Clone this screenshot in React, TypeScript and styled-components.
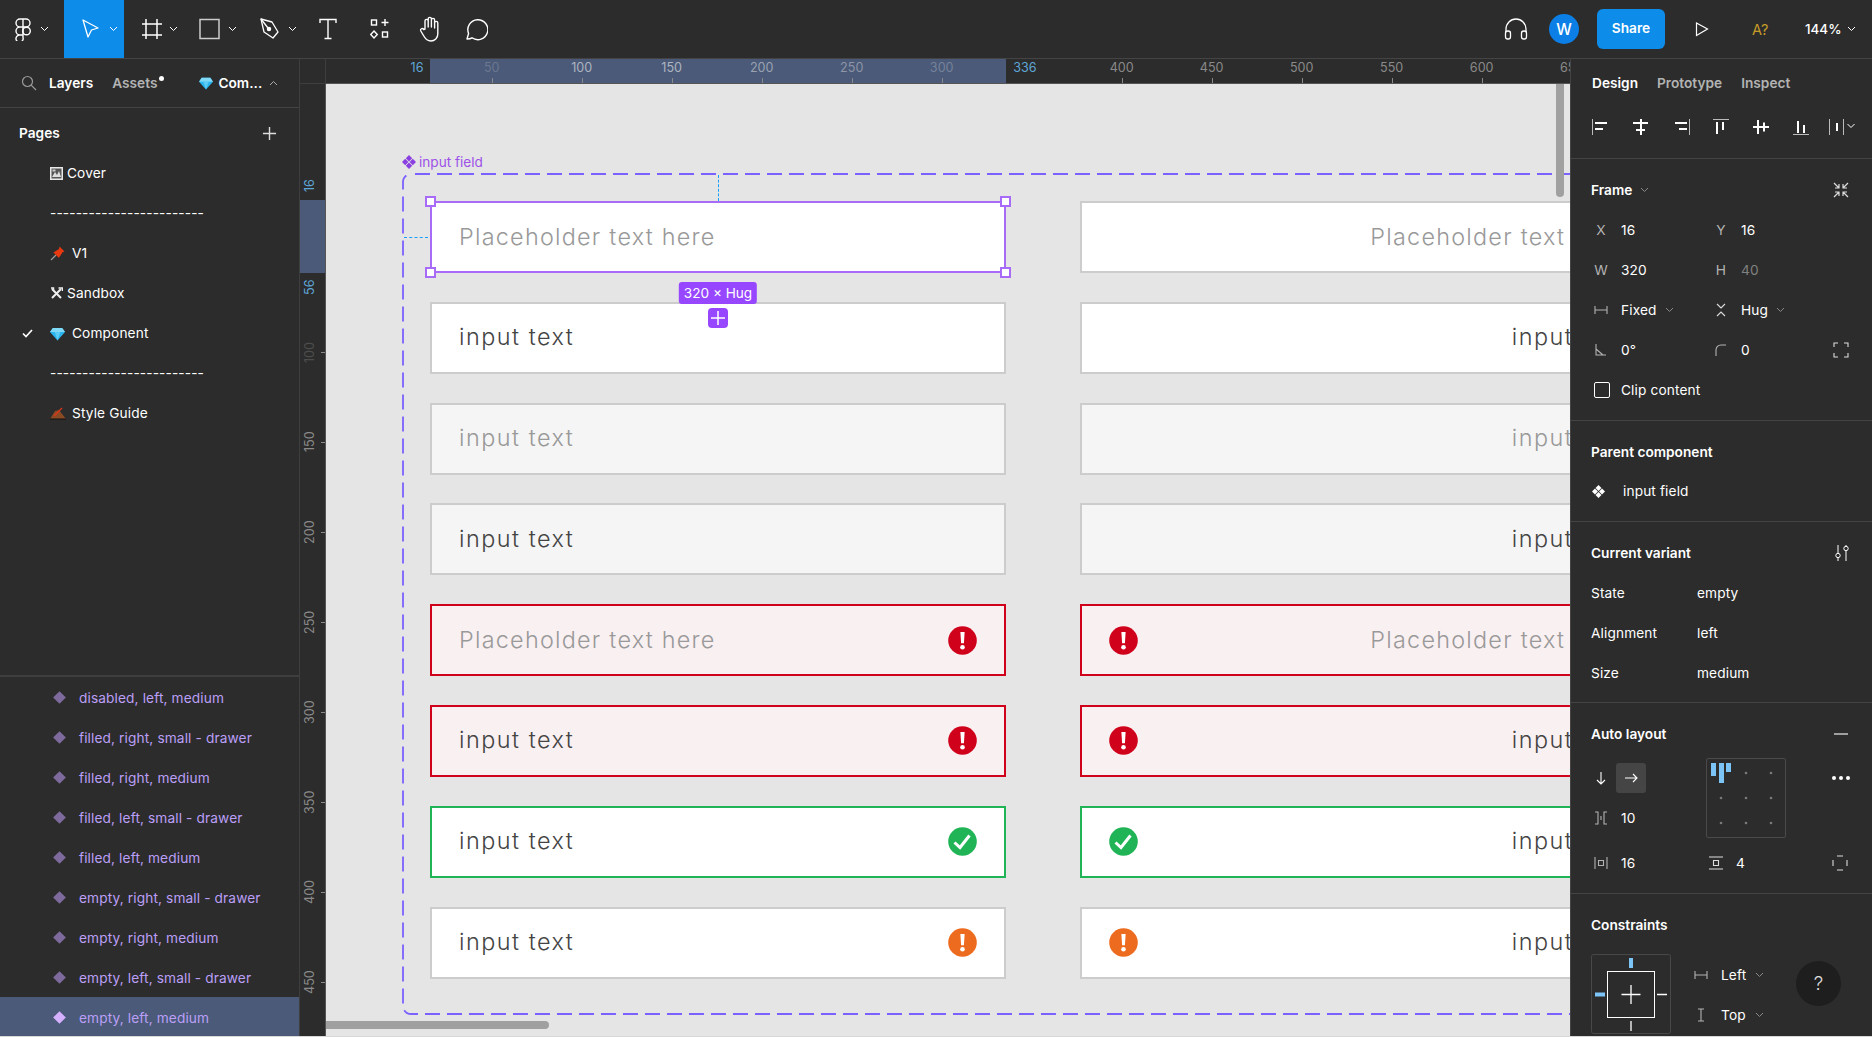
import React from "react";
import styled, { createGlobalStyle } from "styled-components";

const Global = createGlobalStyle`
  html, body { margin: 0; padding: 0; background: #d8d8d8; }
  body { font-family: Inter, "Noto Sans", sans-serif; font-size: 13.7px; color: #fff; }
  #root { width: 1872px; height: 1037px; overflow: hidden; }
`;

const Shell = styled.div`
  width: 1872px; height: 1036px; display: grid; overflow: hidden;
  grid-template-rows: 59px 977px; grid-template-columns: 300px 1270px 302px;
  background: #2c2c2c;
`;

/* ---------- toolbar ---------- */
const Toolbar = styled.header`
  grid-column: 1 / 4; display: flex; align-items: center; justify-content: space-between;
  height: 59px; box-sizing: border-box; border-bottom: 1px solid #444; background: #2c2c2c;
`;
const ToolGroup = styled.div`display: flex; height: 58px; align-items: stretch;`;
const ToolButton = styled.div<{ $w: number; $pad?: number; $gap?: number; $active?: boolean }>`
  width: ${p => p.$w}px; padding-left: ${p => p.$pad ?? 0}px; gap: ${p => p.$gap ?? 0}px; box-sizing: border-box;
  display: flex; align-items: center; justify-content: ${p => (p.$pad === undefined ? "center" : "flex-start")};
  background: ${p => (p.$active ? "#0d8ce9" : "transparent")};
`;
const RightTools = styled.div`display: flex; align-items: center; height: 58px;`;
const Avatar = styled.div`
  width: 30px; height: 30px; border-radius: 50%; background: #0b7fe6; margin-left: 21px;
  display: flex; align-items: center; justify-content: center; font-weight: 500; font-size: 15.5px;
`;
const ShareButton = styled.div`
  width: 68px; height: 40px; border-radius: 6px; background: #0d8ce9; margin-left: 18px; margin-bottom: 1px; box-sizing: border-box; padding-bottom: 2px;
  display: flex; align-items: center; justify-content: center; font-weight: 600; font-size: 13.7px;
`;
const PlayWrap = styled.div`margin-left: 30px; display: flex;`;
const FontWarn = styled.div`margin-left: 43px; width: 20px; color: #c59b27; font-size: 14.5px; white-space: nowrap;`;
const Zoom = styled.div`margin-left: 33px; font-size: 13.4px; font-weight: 500; width: 36px;`;
const ZoomChev = styled.div`margin-left: 6px; margin-right: 16px; display: flex;`;

/* ---------- left panel ---------- */
const LeftPanel = styled.aside`
  display: flex; flex-direction: column; border-right: 1px solid #3e3e3e; box-sizing: border-box;
  background: #2c2c2c; overflow: hidden; height: 978px;
`;
const LeftTabs = styled.div`
  height: 49px; flex: none; box-sizing: border-box; border-bottom: 1px solid #444;
  display: flex; align-items: center; padding-left: 21px; font-weight: 600;
`;
const Tab = styled.span<{ $dim?: boolean; $ml?: number }>`
  display: flex; color: ${p => (p.$dim ? "#b3b3b3" : "#fff")}; margin-left: ${p => p.$ml ?? 0}px; white-space: nowrap;
`;
const Dot = styled.i`width: 5px; height: 5px; border-radius: 50%; background: #fff; margin: -10px 0 0 2px;`;
const PagesHead = styled.div`
  height: 40px; margin-top: 5px; flex: none; display: flex; align-items: center; justify-content: space-between;
  padding: 0 22px 0 19px; font-weight: 600;
`;
const PagesList = styled.div`flex: 1; min-height: 0;`;
const PageRow = styled.div`height: 40px; display: flex; align-items: center; font-weight: 400; letter-spacing: .12px; white-space: nowrap;`;
const CheckCell = styled.div`width: 50px; flex: none; display: flex; justify-content: center; padding-left: 4px; box-sizing: border-box;`;
const PageIcon = styled.span<{ $gap: number }>`display: flex; margin-right: ${p => p.$gap}px;`;
const Layers = styled.div`flex: none; border-top: 2px solid #3e3e3e;`;
const LayerRow = styled.div<{ $sel?: boolean }>`
  height: 40px; box-sizing: border-box; padding-top: 1px; display: flex; align-items: center; padding-left: 55px; gap: 15px;
  background: ${p => (p.$sel ? "#4a5a78" : "transparent")}; color: #bb9ff7; font-weight: 400; letter-spacing: .12px;
`;
const Diamond = styled.i<{ $sel?: boolean }>`
  width: 9px; height: 9px; transform: rotate(45deg); background: ${p => (p.$sel ? "#d5b0ff" : "#7f6a9d")}; flex: none;
`;

/* ---------- centre ---------- */
const Centre = styled.main`
  display: grid; grid-template-columns: 26px 1244px; grid-template-rows: 25px 952px; height: 977px; overflow: hidden;
`;
const Corner = styled.div`border-right: 1px solid #3e3e3e; border-bottom: 1px solid #3e3e3e;`;
const TopRuler = styled.div`position: relative; background: #2c2c2c; border-bottom: 1px solid #555; overflow: hidden; box-sizing: border-box;`;
const LeftRuler = styled.div`position: relative; background: #2c2c2c; border-right: 1px solid #555; overflow: hidden; box-sizing: border-box;`;
const HBand = styled.div`position: absolute; left: 104px; width: 576px; top: 0; bottom: 0; background: #4a5a78;`;
const VBand = styled.div`position: absolute; top: 116px; height: 73px; left: 0; right: 0; background: #4a5a78;`;
const HLabel = styled.span<{ $c: string }>`
  position: absolute; top: 2px; transform: translateX(-50%); font-size: 12.6px; line-height: 14px; color: ${p => p.$c};
`;
const HTick = styled.i`position: absolute; bottom: 0; width: 1px; height: 5px; background: #8a8a8a;`;
const VLabel = styled.span<{ $c: string }>`
  position: absolute; left: 3px; width: 14px; height: 30px; writing-mode: vertical-rl; transform: translateY(-50%) rotate(180deg);
  font-size: 12.6px; line-height: 14px; text-align: center; color: ${p => p.$c};
`;
const VTick = styled.i`position: absolute; right: 0; height: 1px; width: 4px; background: #8a8a8a;`;
const Canvas = styled.div`position: relative; background: #e5e5e5; overflow: hidden;`;
const CompLabel = styled.div`
  position: absolute; left: 76px; top: 70px; display: flex; align-items: center; gap: 3px; color: #9c52e8; font-size: 13.6px; line-height: 16px;
`;
const CompFrame = styled.div`
  position: absolute; left: 76px; top: 89px; width: 1282px; height: 842px; box-sizing: border-box;
  padding: 28px 28px 35px; display: grid; grid-template-columns: 576px 576px; column-gap: 74px; grid-auto-rows: 72px; row-gap: 28.8px;
`;
const DashSvg = styled.svg`position: absolute; left: 0; top: 0; pointer-events: none;`;
type Tone = "plain" | "disabled" | "error" | "ok";
const toneBg: Record<Tone, string> = { plain: "#fff", disabled: "#f5f5f5", error: "#f9f0f2", ok: "#fff" };
const toneBd: Record<Tone, string> = { plain: "#cccccc", disabled: "#cccccc", error: "#d0021b", ok: "#21b457" };
const Field = styled.div<{ $tone: Tone; $right?: boolean; $sel?: boolean }>`
  position: relative; box-sizing: border-box; height: 72px; width: 576px; padding: 0 27px; z-index: ${p => (p.$sel ? 2 : 0)};
  display: flex; align-items: center; justify-content: ${p => (p.$right ? "flex-end" : "space-between")};
  background: ${p => toneBg[p.$tone]}; border: 2px solid ${p => (p.$sel ? "#a76bf7" : toneBd[p.$tone])};
`;
const FieldText = styled.span<{ $ph?: boolean; $grow?: boolean; $short?: boolean }>`
  font-family: Inter, sans-serif; font-weight: 300; font-size: 23.4px; letter-spacing: ${p => (p.$short ? 1.5 : 1.25)}px; white-space: nowrap;
  color: ${p => (p.$ph ? "#999" : "#444")}; margin-left: ${p => (p.$grow ? "auto" : "0")}; margin-bottom: 2px;
`;
const Handle = styled.i<{ $x: "l" | "r"; $y: "t" | "b" }>`
  position: absolute; width: 11px; height: 11px; box-sizing: border-box; background: #fff; border: 2px solid #a76bf7;
  ${p => (p.$x === "l" ? "left: -7px;" : "right: -7px;")} ${p => (p.$y === "t" ? "top: -7px;" : "bottom: -7px;")}
`;
const SizeTag = styled.div`
  position: absolute; left: 50%; top: 79px; transform: translateX(-50%); height: 22px; padding: 0 5px; white-space: nowrap;
  background: #9747ff; border-radius: 3px; color: #fff; font-size: 13.6px; line-height: 22px;
`;
const AddTag = styled.div`
  position: absolute; left: 50%; top: 105px; transform: translateX(-50%); width: 20px; height: 20px; border-radius: 4px; background: #9747ff;
  display: flex; align-items: center; justify-content: center;
`;
const GuideV = styled.i`position: absolute; left: 50%; top: -28px; height: 26px; border-left: 1px dashed #18a0fb;`;
const GuideH = styled.i`position: absolute; top: 50%; left: -28px; width: 24px; border-top: 1px dashed #18a0fb;`;
const ScrollV = styled.i`position: absolute; right: 6px; top: 0; width: 8px; height: 113px; background: #a0a0a0; border-radius: 0 0 4px 4px; z-index: 3;`;
const ScrollH = styled.i`position: absolute; left: 0; bottom: 7px; width: 223px; height: 8px; background: #a0a0a0; border-radius: 0 4px 4px 0; z-index: 3;`;

/* ---------- right panel ---------- */
const RightPanel = styled.aside`
  position: relative; background: #2c2c2c; border-left: 1px solid #444; box-sizing: border-box; height: 977px; overflow: hidden;
  font-weight: 400; letter-spacing: .12px;
`;
const Section = styled.section<{ $pb?: number }>`
  padding: 10px 0 ${p => p.$pb ?? 10}px 20px; border-bottom: 1px solid #444;
`;
const TabsBar = styled.div`height: 48px; display: flex; align-items: center; padding-left: 21px; font-weight: 600; letter-spacing: 0; gap: 19px;`;
const AlignBar = styled.div`
  height: 40px; padding: 0 0 11px 18px; display: flex; align-items: center; gap: 16px; border-bottom: 1px solid #444;
`;
const SecHead = styled.div`
  height: 40px; box-sizing: border-box; padding-top: 1px; display: flex; align-items: center; font-weight: 600; letter-spacing: 0; width: 258px;
`;
const HeadGrow = styled.div`flex: 1;`;
const ChevGap = styled.span`display: flex; margin-left: 8px;`;
const PropRow = styled.div`
  height: 40px; box-sizing: border-box; padding-top: 1px; display: grid; grid-template-columns: 30px 90px 30px 90px 30px; align-items: center;
`;
const PropLabel = styled.span`width: 20px; display: flex; justify-content: center; color: #b3b3b3;`;
const Value = styled.span<{ $dim?: boolean }>`display: flex; align-items: center; color: ${p => (p.$dim ? "#808080" : "#fff")};`;
const CheckBox = styled.i`width: 14px; height: 14px; border: 1px solid #fff; border-radius: 2px; margin-left: 3px;`;
const ClipRow = styled.div`height: 40px; box-sizing: border-box; padding-top: 1px; display: grid; grid-template-columns: 30px 1fr; align-items: center;`;
const ParentRow = styled.div`height: 40px; display: flex; align-items: center; padding-left: 1px; gap: 18px;`;
const VariantRow = styled.div`height: 40px; box-sizing: border-box; padding-top: 1px; display: grid; grid-template-columns: 106px 1fr; align-items: center;`;
const AutoGrid = styled.div`display: grid; grid-template-columns: 115px 80px 46px 20px; grid-template-rows: 40px 40px 50px; margin-top: 5px;`;
const AutoCell = styled.div<{ $r: number; $c: number }>`
  grid-row: ${p => p.$r}; grid-column: ${p => p.$c}; display: flex; align-items: center; gap: 10px;
`;
const DirOn = styled.div`width: 30px; height: 30px; border-radius: 3px; background: #454545; display: flex; align-items: center; justify-content: center; margin-left: -5px;`;
const IconCell = styled.span`width: 20px; display: flex; justify-content: center;`;
const AlignPad = styled.div`
  grid-row: 1 / 3; grid-column: 2; width: 80px; height: 80px; box-sizing: border-box; border: 1px solid #4a4a4a; border-radius: 2px; display: flex;
`;
const ConstraintWrap = styled.div`display: flex; margin-top: 10px;`;
const SideCol = styled.div`margin-left: 20px;`;
const SideRow = styled.div`height: 40px; box-sizing: border-box; padding-top: 1px; display: flex; align-items: center; gap: 10px;`;
const SideChev = styled.span`display: flex; margin-left: -1px;`;
const Help = styled.div`
  position: absolute; left: 225px; top: 902px; width: 45px; height: 45px; border-radius: 50%; background: #1e1e1e;
  display: flex; align-items: center; justify-content: center; font-size: 19px; font-weight: 300; color: #ddd;
`;

/* ---------- icons ---------- */
const Chev = ({ s = "#fff", up }: { s?: string; up?: boolean }) => (
  <svg width="9" height="6" viewBox="0 0 9 6" fill="none"><path d={up ? "M1 5l3.5-3.5L8 5" : "M1 1l3.5 3.5L8 1"} stroke={s} /></svg>
);
const Plus = ({ s = "#fff", n = 16 }: { s?: string; n?: number }) => (
  <svg width={n} height={n} viewBox="0 0 16 16"><path d="M8 1v14M1 8h14" stroke={s} strokeWidth="1.5" /></svg>
);
const FigmaLogo = () => (
  <svg width="20" height="24" viewBox="0 0 20 24" fill="none" stroke="#fff" strokeWidth="1.4">
    <path d="M10 2H7a4 4 0 0 0 0 8h3zM10 2h3a4 4 0 0 1 0 8h-3zM10 10H7a4 4 0 0 0 0 8h3zM7 18h3v2.5a3.6 3.6 0 1 1-3-2.5z" />
    <circle cx="13.5" cy="14" r="3.8" />
  </svg>
);
const MoveIco = () => (
  <svg width="20" height="24" viewBox="0 0 20 24" fill="none"><path d="M3 3l15 8-6.5 2-3.5 7z" stroke="#fff" strokeWidth="1.3" strokeLinejoin="round" /></svg>
);
const FrameIco = () => (
  <svg width="22" height="24" viewBox="0 0 22 24" fill="none" stroke="#fff" strokeWidth="1.5"><path d="M5 2v20M16 2v20M1 7h20M1 18h20" /></svg>
);
const RectIco = () => (
  <svg width="22" height="24" viewBox="0 0 22 24" fill="none"><rect x="1" y="2.5" width="19" height="19" stroke="#ccc" strokeWidth="1.5" /></svg>
);
const PenIco = () => (
  <svg width="22" height="24" viewBox="0 0 22 24" fill="none" stroke="#fff" strokeWidth="1.3" strokeLinejoin="round">
    <path d="M2 2l11 3 6 10-5 6-9-6z" /><path d="M2 2l7 9" /><circle cx="10" cy="12" r="1.6" fill="#fff" />
  </svg>
);
const TextIco = () => (
  <svg width="18" height="24" viewBox="0 0 18 24" fill="none" stroke="#fff" strokeWidth="1.4"><path d="M1 6V2.5h16V6M9 2.5v19M5.5 21.5h7" /></svg>
);
const CompIco = () => (
  <svg width="20" height="22" viewBox="0 0 20 22" fill="none" stroke="#fff" strokeWidth="1.4">
    <rect x="1.5" y="2" width="5" height="5" /><path d="M15 1v7M11.5 4.5h7" /><path d="M4 13l3.3 3.5L4 20 .7 16.5z" /><rect x="12.5" y="14" width="5" height="5" />
  </svg>
);
const HandIco = () => (
  <svg width="24" height="26" viewBox="0 0 24 26" fill="none" stroke="#fff" strokeWidth="1.4" strokeLinejoin="round" strokeLinecap="round">
    <path d="M7 13V5a1.6 1.6 0 0 1 3.2 0v6V3a1.6 1.6 0 0 1 3.2 0v8V4a1.6 1.6 0 0 1 3.2 0v8V7a1.6 1.6 0 0 1 3.2 0v11c0 4-3 7-7 7-3.5 0-5-1.5-7-5l-3-5c-1-2 1.5-3.5 3-1.5z" />
  </svg>
);
const CommentIco = () => (
  <svg width="24" height="24" viewBox="0 0 24 24" fill="none"><path d="M3 22l1.6-5.5A10 10 0 1 1 8 20.8c-1.5 1-3.5 1.2-5 1.2z" stroke="#fff" strokeWidth="1.4" strokeLinejoin="round" /></svg>
);
const HeadIco = () => (
  <svg width="24" height="24" viewBox="0 0 24 24" fill="none" stroke="#fff" strokeWidth="1.3">
    <path d="M2 15v-3a10 10 0 0 1 20 0v3" /><rect x="1.5" y="14" width="5" height="8" rx="2.2" /><rect x="17.5" y="14" width="5" height="8" rx="2.2" />
  </svg>
);
const PlayIco = () => (
  <svg width="14" height="16" viewBox="0 0 14 16" fill="none"><path d="M1.5 2v12.5L12.5 8z" stroke="#fff" strokeWidth="1.2" /></svg>
);
const SearchIco = () => (
  <svg width="16" height="16" viewBox="0 0 16 16" fill="none" stroke="#9a9a9a" strokeWidth="1.2"><circle cx="6.5" cy="6.5" r="5" /><path d="M10.2 10.2L15 15" /></svg>
);
const Gem = ({ n = 15 }: { n?: number }) => (
  <svg width={n} height={n} viewBox="0 0 16 16"><path d="M3 2h10l3 4.5L8 15.500 0 6.500z" fill="#29b6f0" /><path d="M3 2h10l3 4.5H0z" fill="#7fd9f7" /><path d="M5 6.500h6L8 15.500z" fill="#5ccbf5" /></svg>
);
const CoverEmoji = () => (
  <svg width="13" height="13" viewBox="0 0 13 13"><rect width="13" height="13" fill="#e8e8e8" /><rect x="1.5" y="1.5" width="10" height="10" fill="#555" /><path d="M2 10l3-5 2 3 2-4 2 6z" fill="#ddd" /><rect x="2.5" y="2.5" width="3" height="2" fill="#ccc" /></svg>
);
const PinEmoji = () => (
  <svg width="16" height="16" viewBox="0 0 16 16"><path d="M1 15l5-5" stroke="#9a9a9a" strokeWidth="1.2" /><path d="M9.5 1.5l5 5-2 .8-2.500 4-1.200 1.500L3.500 7.600 5 6.400l4-2.500z" fill="#e8380f" /></svg>
);
const ToolsEmoji = () => (
  <svg width="13" height="13" viewBox="0 0 13 13" stroke="#eee" strokeWidth="2"><path d="M2 2l9 9M11 2L2 11" /><path d="M8.5 1h4v3M1 1h2.500v2" strokeWidth="1.5" fill="none" /></svg>
);
const InkEmoji = () => (
  <svg width="16" height="14" viewBox="0 0 16 14"><path d="M0 13l5-8 4-1 7 9z" fill="#8a4a24" /><path d="M4 10l8-8" stroke="#e0351a" strokeWidth="1.3" /><path d="M0 13h16" stroke="#111" /></svg>
);
const CompMark = ({ c = "#fff", n = 14 }: { c?: string; n?: number }) => (
  <svg width={n} height={n} viewBox="0 0 14 14" fill={c}>
    <path d="M7 0l3.200 3.200L7 6.400 3.800 3.200zM7 7.600l3.200 3.200L7 14l-3.200-3.200zM3.200 3.800L6.400 7l-3.200 3.200L0 7zM10.800 3.800L14 7l-3.200 3.200L7.600 7z" />
  </svg>
);
const CheckMark = () => (
  <svg width="11" height="9" viewBox="0 0 11 9" fill="none"><path d="M1 4.500l3 3 6-6.500" stroke="#fff" strokeWidth="1.7" /></svg>
);
const StatusDot = ({ c, ok }: { c: string; ok?: boolean }) => (
  <svg width="29" height="29" viewBox="0 0 29 29">
    <circle cx="14.5" cy="14.5" r="14.3" fill={c} />
    {ok ? <path d="M6.5 15.5l5.500 5L21.500 8.500" fill="none" stroke="#fff" strokeWidth="3" />
      : <><path d="M12.4 6h4.200l-.7 11.200h-2.800z" fill="#fff" /><circle cx="14.5" cy="21.2" r="2.3" fill="#fff" /></>}
  </svg>
);
const Al = ({ children }: { children: React.ReactNode }) => (
  <svg width="24" height="20" viewBox="0 0 24 20" fill="#fff">{children}</svg>
);
const alignIcons = [
  <><rect x="3" y="2" width="1" height="16" fill="#bbb" /><rect x="6" y="5" width="12" height="2" /><rect x="6" y="11" width="8" height="2" /></>,
  <><rect x="4" y="5" width="15" height="2" /><rect x="7" y="12" width="9" height="2" /><rect x="11" y="2" width="2" height="16" /></>,
  <><rect x="20" y="2" width="1" height="16" fill="#bbb" /><rect x="6" y="5" width="12" height="2" /><rect x="10" y="11" width="8" height="2" /></>,
  <><rect x="4" y="2" width="16" height="1" fill="#bbb" /><rect x="7" y="5" width="2" height="12" /><rect x="13" y="5" width="2" height="8" /></>,
  <><rect x="4" y="9" width="16" height="2" /><rect x="8" y="3" width="2" height="14" /><rect x="14" y="5.5" width="2" height="9" /></>,
  <><rect x="4" y="17" width="16" height="1" fill="#bbb" /><rect x="8" y="4" width="2" height="12" /><rect x="14" y="8" width="2" height="8" /></>,
];
const Distribute = () => (
  <svg width="32" height="20" viewBox="0 0 32 20" fill="none">
    <rect x="0" y="2" width="1" height="16" fill="#bbb" /><rect x="7" y="6" width="2" height="8" fill="#fff" /><rect x="14" y="2" width="1" height="16" fill="#bbb" />
    <path d="M18.500 7l3.500 3.500L25.500 7" stroke="#fff" />
  </svg>
);
const Collapse = () => (
  <svg width="16" height="16" viewBox="0 0 16 16" fill="none" stroke="#ddd" strokeWidth="1.2">
    <path d="M1 1l5 5M6 2v4H2M15 1l-5 5M10 2v4h4M1 15l5-5M6 14v-4H2M15 15l-5-5M10 14v-4h4" />
  </svg>
);
const Mini = ({ d, w = 16, h = 16, s = "#b3b3b3" }: { d: string; w?: number; h?: number; s?: string }) => (
  <svg width={w} height={h} viewBox={`0 0 ${w} ${h}`} fill="none"><path d={d} stroke={s} strokeWidth="1.1" /></svg>
);
const SliderIco = () => (
  <svg width="14" height="18" viewBox="0 0 14 18" fill="none" stroke="#fff"><path d="M3 1v8M3 14v3M11 1v1M11 7v10" /><circle cx="3" cy="11.5" r="2.2" /><circle cx="11" cy="4.5" r="2.2" /></svg>
);
const AlignPadArt = () => (
  <svg width="78" height="78" viewBox="0 0 78 78">
    <rect x="4" y="4" width="5" height="13" fill="#7cc4f5" /><rect x="12" y="4" width="5" height="20" fill="#7cc4f5" /><rect x="19" y="4" width="5" height="9" fill="#7cc4f5" />
    {[[39, 14], [64, 14], [14, 39], [39, 39], [64, 39], [14, 64], [39, 64], [64, 64]].map(([x, y]) => (
      <circle key={`${x}-${y}`} cx={x} cy={y} r="1.3" fill="#7a7a7a" />
    ))}
  </svg>
);
const MoreIco = () => (
  <svg width="18" height="4" viewBox="0 0 18 4" fill="#fff"><circle cx="2" cy="2" r="2" /><circle cx="9" cy="2" r="2" /><circle cx="16" cy="2" r="2" /></svg>
);
const ConstraintArt = () => (
  <svg width="80" height="80" viewBox="0 0 80 80" fill="none">
    <rect x=".5" y=".5" width="79" height="79" rx="2" stroke="#484848" />
    <rect x="16.5" y="17.5" width="47" height="46" stroke="#fff" />
    <path d="M40 31v19M30.500 40.500h19" stroke="#fff" strokeWidth="1.3" />
    <rect x="38" y="4" width="4" height="10" fill="#7cc4f5" />
    <rect x="4" y="38.5" width="10" height="4" fill="#7cc4f5" />
    <path d="M66 40.500h10M40 67v10" stroke="#fff" strokeWidth="1.3" />
  </svg>
);

/* ---------- data ---------- */
const hLabels: [number, string][] = [
  [50, "#6a7790"], [100, "#aeb4c0"], [150, "#aeb4c0"], [200, "#9aa2b2"], [250, "#8d95a7"], [300, "#76829b"],
  [400, "#8a8a8a"], [450, "#8a8a8a"], [500, "#8a8a8a"], [550, "#8a8a8a"], [600, "#8a8a8a"], [650, "#8a8a8a"],
];
const vLabels: [number, string][] = [
  [100, "#4d4d4d"], [150, "#8a8a8a"], [200, "#8a8a8a"], [250, "#8a8a8a"], [300, "#8a8a8a"], [350, "#8a8a8a"], [400, "#8a8a8a"], [450, "#8a8a8a"],
];
const rule = "------------------------";
const pages: { name: string; gap: number; icon?: React.ReactNode; on?: boolean }[] = [
  { name: "Cover", gap: 4, icon: <CoverEmoji /> },
  { name: rule, gap: 0 },
  { name: "V1", gap: 6, icon: <PinEmoji /> },
  { name: "Sandbox", gap: 4, icon: <ToolsEmoji /> },
  { name: "Component", gap: 7, icon: <Gem />, on: true },
  { name: rule, gap: 0 },
  { name: "Style Guide", gap: 6, icon: <InkEmoji /> },
];
const layers = [
  "disabled, left, medium", "filled, right, small - drawer", "filled, right, medium", "filled, left, small - drawer", "filled, left, medium",
  "empty, right, small - drawer", "empty, right, medium", "empty, left, small - drawer", "empty, left, medium",
];
type Spec = { t: string; ph?: boolean; tone: Tone; st?: "err" | "ok" | "warn" };
const rows: Spec[] = [
  { t: "Placeholder text here", ph: true, tone: "plain" },
  { t: "input text", tone: "plain" },
  { t: "input text", ph: true, tone: "disabled" },
  { t: "input text", tone: "disabled" },
  { t: "Placeholder text here", ph: true, tone: "error", st: "err" },
  { t: "input text", tone: "error", st: "err" },
  { t: "input text", tone: "ok", st: "ok" },
  { t: "input text", tone: "plain", st: "warn" },
];
const stColor = { err: "#d0021b", ok: "#21b457", warn: "#ed6b1f" };

const Status = ({ st }: { st?: Spec["st"] }) => (st ? <StatusDot c={stColor[st]} ok={st === "ok"} /> : null);

export default function App() {
  return (
    <>
      <Global />
      <Shell>
        <Toolbar>
          <ToolGroup>
            <ToolButton $w={64} $pad={13} $gap={7}><FigmaLogo /><Chev /></ToolButton>
            <ToolButton $w={60} $pad={16} $gap={9} $active><MoveIco /><Chev /></ToolButton>
            <ToolButton $w={62} $pad={17} $gap={6}><FrameIco /><Chev /></ToolButton>
            <ToolButton $w={58} $pad={13} $gap={7}><RectIco /><Chev /></ToolButton>
            <ToolButton $w={60} $pad={15} $gap={7}><PenIco /><Chev /></ToolButton>
            <ToolButton $w={48}><TextIco /></ToolButton>
            <ToolButton $w={56}><CompIco /></ToolButton>
            <ToolButton $w={44}><HandIco /></ToolButton>
            <ToolButton $w={48}><CommentIco /></ToolButton>
          </ToolGroup>
          <RightTools>
            <HeadIco />
            <Avatar>W</Avatar>
            <ShareButton>Share</ShareButton>
            <PlayWrap><PlayIco /></PlayWrap>
            <FontWarn>A?</FontWarn>
            <Zoom>144%</Zoom>
            <ZoomChev><Chev /></ZoomChev>
          </RightTools>
        </Toolbar>

        <LeftPanel>
          <LeftTabs>
            <SearchIco />
            <Tab $ml={12}>Layers</Tab>
            <Tab $dim $ml={19}>Assets</Tab>
            <Dot />
            <Tab $ml={35}><Gem n={14} /></Tab>
            <Tab $ml={5}>Com...</Tab>
            <Tab $ml={7}><Chev s="#aaa" up /></Tab>
          </LeftTabs>
          <PagesHead>Pages<Plus n={15} s="#ddd" /></PagesHead>
          <PagesList>
            {pages.map((p, i) => (
              <PageRow key={i}>
                <CheckCell>{p.on ? <CheckMark /> : null}</CheckCell>
                {p.icon ? <PageIcon $gap={p.gap}>{p.icon}</PageIcon> : null}
                {p.name}
              </PageRow>
            ))}
          </PagesList>
          <Layers>
            {layers.map((l, i) => (
              <LayerRow key={l} $sel={i === 8}><Diamond $sel={i === 8} />{l}</LayerRow>
            ))}
          </Layers>
        </LeftPanel>

        <Centre>
          <Corner />
          <TopRuler>
            <HBand />
            {hLabels.map(([v, c]) => (
              <React.Fragment key={v}>
                <HLabel $c={c} style={{ left: 75.7 + v * 1.8 }}>{v}</HLabel>
                <HTick style={{ left: 75.7 + v * 1.8 }} />
              </React.Fragment>
            ))}
            <HLabel $c="#5fa6d8" style={{ left: 91 }}>16</HLabel>
            <HLabel $c="#5fa6d8" style={{ left: 699 }}>336</HLabel>
          </TopRuler>
          <LeftRuler>
            <VBand />
            {vLabels.map(([v, c]) => (
              <React.Fragment key={v}>
                <VLabel $c={c} style={{ top: 87.7 + v * 1.8 }}>{v}</VLabel>
                <VTick style={{ top: 87.7 + v * 1.8 }} />
              </React.Fragment>
            ))}
            <VLabel $c="#5fa6d8" style={{ top: 102 }}>16</VLabel>
            <VLabel $c="#5fa6d8" style={{ top: 203 }}>56</VLabel>
          </LeftRuler>
          <Canvas>
            <CompLabel><CompMark c="#8a3fe0" />input field</CompLabel>
            <CompFrame>
              <DashSvg width="1282" height="842" viewBox="0 0 1282 842" fill="none">
                <rect x="1" y="1" width="1280" height="840" rx="8" stroke="#7b61ff" strokeWidth="1.8" strokeDasharray="15 7" strokeDashoffset="-4" />
              </DashSvg>
              {rows.map((r, i) => {
                const short = r.t === "input text";
                return (
                  <React.Fragment key={i}>
                    <Field $tone={r.tone} $sel={i === 0}>
                      <FieldText $ph={r.ph} $short={short}>{r.t}</FieldText>
                      <Status st={r.st} />
                      {i === 0 ? (
                        <>
                          <Handle $x="l" $y="t" /><Handle $x="r" $y="t" /><Handle $x="l" $y="b" /><Handle $x="r" $y="b" />
                          <GuideV /><GuideH />
                          <SizeTag>320 × Hug</SizeTag>
                          <AddTag><Plus n={16} /></AddTag>
                        </>
                      ) : null}
                    </Field>
                    <Field $tone={r.tone} $right>
                      <Status st={r.st} />
                      <FieldText $ph={r.ph} $short={short} $grow>{r.t}</FieldText>
                    </Field>
                  </React.Fragment>
                );
              })}
            </CompFrame>
            <ScrollV />
            <ScrollH />
          </Canvas>
        </Centre>

        <RightPanel>
          <TabsBar>
            <Tab>Design</Tab><Tab $dim>Prototype</Tab><Tab $dim>Inspect</Tab>
          </TabsBar>
          <AlignBar>
            {alignIcons.map((a, i) => <Al key={i}>{a}</Al>)}
            <Distribute />
          </AlignBar>
          <Section $pb={11}>
            <SecHead>Frame<ChevGap><Chev s="#8a8a8a" /></ChevGap><HeadGrow /><Collapse /></SecHead>
            <PropRow><PropLabel>X</PropLabel><Value>16</Value><PropLabel>Y</PropLabel><Value>16</Value></PropRow>
            <PropRow><PropLabel>W</PropLabel><Value>320</Value><PropLabel>H</PropLabel><Value $dim>40</Value></PropRow>
            <PropRow>
              <PropLabel><Mini d="M2 4v8M14 4v8M2 8h12" /></PropLabel><Value>Fixed<ChevGap><Chev s="#8a8a8a" /></ChevGap></Value>
              <PropLabel><Mini d="M4 2l4 4 4-4M4 14l4-4 4 4" s="#ddd" /></PropLabel><Value>Hug<ChevGap><Chev s="#8a8a8a" /></ChevGap></Value>
            </PropRow>
            <PropRow>
              <PropLabel><Mini d="M3 2v11h10M3 7l7 6" /></PropLabel><Value>0°</Value>
              <PropLabel><Mini d="M3 14V8a5 5 0 0 1 5-5h5" /></PropLabel><Value>0</Value>
              <PropLabel><Mini d="M1 5V1h4M11 1h4v4M15 11v4h-4M5 15H1v-4" s="#ddd" /></PropLabel>
            </PropRow>
            <ClipRow><CheckBox />Clip content</ClipRow>
          </Section>
          <Section>
            <SecHead>Parent component</SecHead>
            <ParentRow><CompMark n={13} />input field</ParentRow>
          </Section>
          <Section>
            <SecHead>Current variant<HeadGrow /><SliderIco /></SecHead>
            <VariantRow>State<span>empty</span></VariantRow>
            <VariantRow>Alignment<span>left</span></VariantRow>
            <VariantRow>Size<span>medium</span></VariantRow>
          </Section>
          <Section $pb={5}>
            <SecHead>Auto layout<HeadGrow /><Mini d="M1 8h14" s="#fff" /></SecHead>
            <AutoGrid>
              <AutoCell $r={1} $c={1}>
                <IconCell><Mini d="M8 2v12M4 10l4 4 4-4" s="#fff" /></IconCell>
                <DirOn><Mini d="M2 8h12M10 4l4 4-4 4" s="#fff" /></DirOn>
              </AutoCell>
              <AlignPad><AlignPadArt /></AlignPad>
              <AutoCell $r={1} $c={4}><MoreIco /></AutoCell>
              <AutoCell $r={2} $c={1}>
                <IconCell><Mini d="M2 2h3v12H2M14 2h-3v12h3M8 6v4" /></IconCell>10
              </AutoCell>
              <AutoCell $r={3} $c={1}>
                <IconCell><Mini d="M2 2v12M14 2v12M5.5 5.5h5v5h-5z" /></IconCell>16
              </AutoCell>
              <AutoCell $r={3} $c={2}>
                <IconCell><Mini d="M1 2h14M1 14h14M5.5 5.5h5v5h-5z" s="#ddd" /></IconCell>4
              </AutoCell>
              <AutoCell $r={3} $c={4}><Mini d="M5 1h6M5 15h6M1 5v6M15 5v6" s="#ddd" /></AutoCell>
            </AutoGrid>
          </Section>
          <Section>
            <SecHead>Constraints</SecHead>
            <ConstraintWrap>
              <ConstraintArt />
              <SideCol>
                <SideRow><IconCell><Mini d="M2 4v8M14 4v8M2 8h12" /></IconCell>Left<SideChev><Chev s="#8a8a8a" /></SideChev></SideRow>
                <SideRow><IconCell><Mini d="M5 2h6M5 14h6M8 2v12" /></IconCell>Top<SideChev><Chev s="#8a8a8a" /></SideChev></SideRow>
              </SideCol>
            </ConstraintWrap>
          </Section>
          <Help>?</Help>
        </RightPanel>
      </Shell>
    </>
  );
}
